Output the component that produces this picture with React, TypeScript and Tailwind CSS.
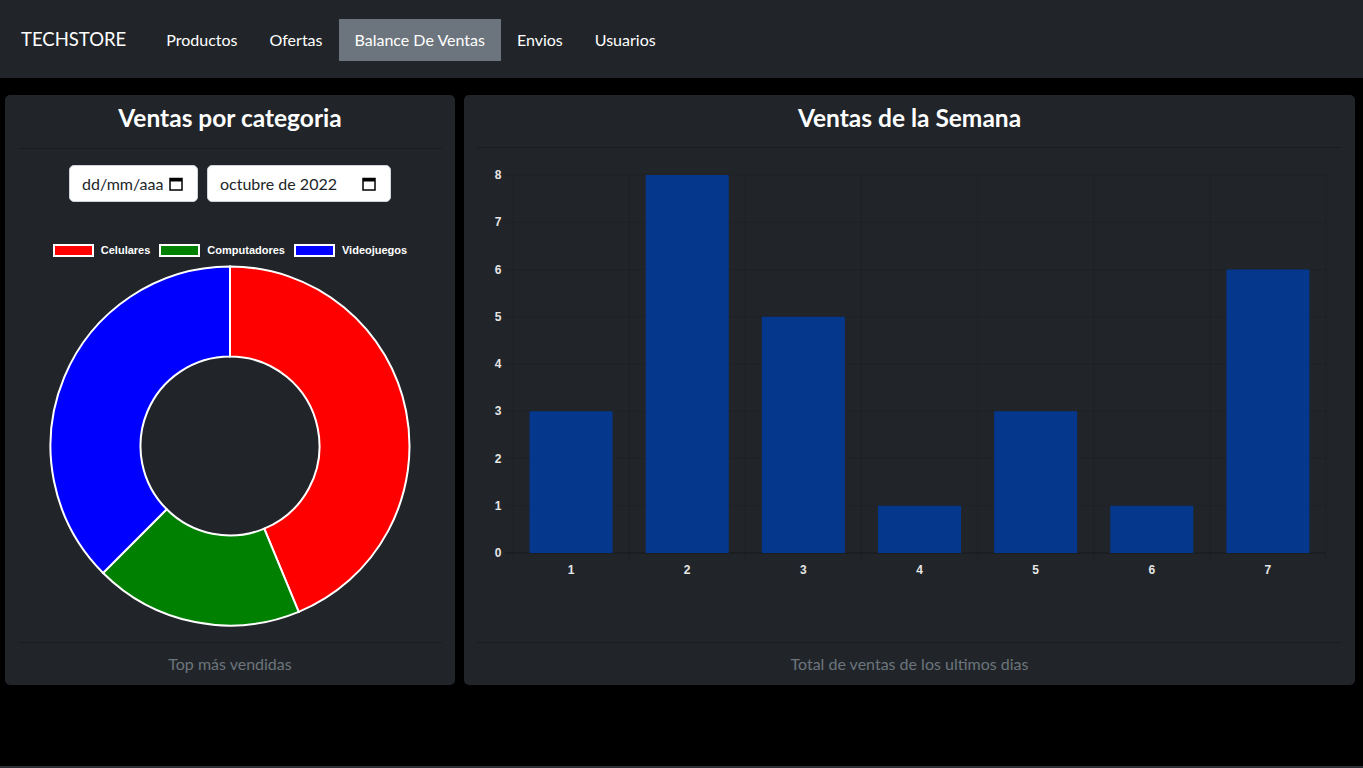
import React from "react";

const NAV = ["Productos", "Ofertas", "Balance De Ventas", "Envios", "Usuarios"];

const SLICES = [
  { label: "Celulares", value: 7, color: "#ff0000" },
  { label: "Computadores", value: 3, color: "#008000" },
  { label: "Videojuegos", value: 6, color: "#0000ff" },
];

const WEEK = [3, 8, 5, 1, 3, 1, 6];

function CalendarIcon() {
  return (
    <svg width="14" height="14" viewBox="0 0 14 14" className="shrink-0">
      <rect x="1" y="1.5" width="12" height="11.5" fill="none" stroke="#000" strokeWidth="1.5" />
      <rect x="1" y="1.5" width="12" height="3" fill="#000" />
    </svg>
  );
}

function arcPath(cx: number, cy: number, R: number, r: number, a0: number, a1: number) {
  const p = (rad: number, a: number) => [cx + rad * Math.sin(a), cy - rad * Math.cos(a)];
  const large = a1 - a0 > Math.PI ? 1 : 0;
  const [x0, y0] = p(R, a0);
  const [x1, y1] = p(R, a1);
  const [x2, y2] = p(r, a1);
  const [x3, y3] = p(r, a0);
  return `M${x0} ${y0} A${R} ${R} 0 ${large} 1 ${x1} ${y1} L${x2} ${y2} A${r} ${r} 0 ${large} 0 ${x3} ${y3} Z`;
}

function Donut() {
  const total = SLICES.reduce((s, x) => s + x.value, 0);
  let acc = 0;
  return (
    <svg width="424" height="362" viewBox="0 0 424 362">
      {SLICES.map((s) => {
        const a0 = (acc / total) * Math.PI * 2;
        acc += s.value;
        const a1 = (acc / total) * Math.PI * 2;
        return (
          <path
            key={s.label}
            d={arcPath(212, 181, 179.5, 89.5, a0, a1)}
            fill={s.color}
            stroke="#fff"
            strokeWidth="2"
          />
        );
      })}
    </svg>
  );
}

function BarChart() {
  const left = 36;
  const right = 849;
  const top = 27;
  const bottom = 405;
  const step = (bottom - top) / 8;
  const col = (right - left) / 7;
  const barW = 83;
  return (
    <svg width="865" height="494" viewBox="0 0 865 494" className="font-['Liberation_Sans',Arial,sans-serif]">
      {Array.from({ length: 9 }).map((_, i) => {
        const y = bottom - i * step;
        return (
          <g key={i}>
            <line x1={left - 8} x2={right} y1={y} y2={y} stroke={i === 0 ? "rgba(0,0,0,0.3)" : "rgba(0,0,0,0.12)"} />
            <text x={21} y={y + 4} textAnchor="middle" fontSize="12" fontWeight="700" fill="#e6e6e6">
              {i}
            </text>
          </g>
        );
      })}
      {Array.from({ length: 8 }).map((_, i) => {
        const x = left + i * col;
        return <line key={i} x1={x} x2={x} y1={top} y2={bottom + 8} stroke="rgba(0,0,0,0.12)" />;
      })}
      {WEEK.map((v, i) => {
        const cx = left + col * (i + 0.5);
        return (
          <g key={i}>
            <rect x={cx - barW / 2} y={bottom - v * step} width={barW} height={v * step} fill="#05378c" />
            <text x={cx} y={426} textAnchor="middle" fontSize="12" fontWeight="700" fill="#e6e6e6">
              {i + 1}
            </text>
          </g>
        );
      })}
    </svg>
  );
}

function Card({ title, footer, width, children }: { title: string; footer: string; width: string; children: React.ReactNode }) {
  return (
    <div className={`${width} flex h-[590px] flex-col rounded-[5px] bg-[#212529]`}>
      <div className="mx-[13px] flex h-[54px] items-center justify-center border-b border-[#1a1d20] pb-[6px]">
        <h3 className="text-[24.5px] font-bold text-white">{title}</h3>
      </div>
      <div className="mx-[13px] flex flex-1 flex-col items-center border-b border-[#1a1d20]">{children}</div>
      <div className="flex h-[42px] items-center justify-center text-[16px] text-[#6c757d]">{footer}</div>
    </div>
  );
}

export default function App() {
  return (
    <div className="flex min-h-[768px] flex-col bg-black font-['Lato','Open_Sans',sans-serif]">
      <nav className="flex h-[78px] items-center bg-[#212529] pl-[21px] pt-[2px] text-white">
        <span className="mr-[24px] text-[18.5px]">TECHSTORE</span>
        {NAV.map((n) => (
          <a
            key={n}
            className={`px-[16px] py-[10px] text-[16px] leading-[22px] ${n === "Balance De Ventas" ? "bg-[#6c757d]" : ""}`}
          >
            {n}
          </a>
        ))}
      </nav>
      <main className="flex flex-1 gap-[9px] pl-[5px] pt-[17px]">
        <Card title="Ventas por categoria" footer="Top más vendidas" width="w-[450px]">
          <div className="mt-[16px] flex gap-[9px] text-[16px] text-[#212529]">
            <div className="flex h-[37px] w-[129px] items-center overflow-hidden rounded-[5px] border border-[#ced4da] bg-white pl-[12px] pr-[14px]">
              <span className="flex-1 whitespace-nowrap">dd/mm/aaa</span>
              <CalendarIcon />
            </div>
            <div className="flex h-[37px] w-[184px] items-center rounded-[5px] border border-[#ced4da] bg-white pl-[12px] pr-[14px]">
              <span className="flex-1 whitespace-nowrap">octubre de 2022</span>
              <CalendarIcon />
            </div>
          </div>
          <div className="mt-[41px] flex items-center gap-[9px] font-['Liberation_Sans',Arial,sans-serif] text-[11px] font-bold leading-[14px] text-white">
            {SLICES.map((s) => (
              <div key={s.label} className="flex items-center gap-[7px]">
                <span className="h-[13px] w-[41px] border-2 border-white" style={{ backgroundColor: s.color }} />
                <span>{s.label}</span>
              </div>
            ))}
          </div>
          <div className="mt-[8px]">
            <Donut />
          </div>
        </Card>
        <Card title="Ventas de la Semana" footer="Total de ventas de los ultimos dias" width="w-[891px]">
          <BarChart />
        </Card>
      </main>
      <div className="h-[2px] bg-[#2b2f33]" />
    </div>
  );
}
